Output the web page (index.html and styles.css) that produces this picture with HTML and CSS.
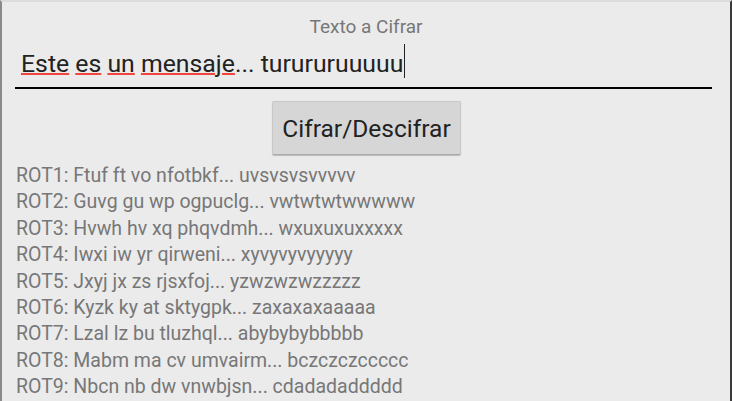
FILE: index.html
```html
<!DOCTYPE html>
<html lang="es">
<head>
  <meta charset="UTF-8">
  <title>Cifrado ROT</title>
  <meta name="viewport" content="width=device-width, initial-scale=1.0">
  <link rel="stylesheet" href="styles.css">
</head>
<body>

  <div class="screen">
    <div class="label">Texto a Cifrar</div>

    <div class="field">
      <span class="typo">Este</span> <span class="typo">es</span> <span class="typo">un</span> <span class="typo">mensaje</span>... turururuuuuu<span class="cursor"></span>
    </div>

    <div class="actions">
      <button class="btn">Cifrar/Descifrar</button>
    </div>

    <div class="results">
      <div>ROT1: Ftuf ft vo nfotbkf... uvsvsvsvvvvv</div>
      <div>ROT2: Guvg gu wp ogpuclg... vwtwtwtwwwww</div>
      <div>ROT3: Hvwh hv xq phqvdmh... wxuxuxuxxxxx</div>
      <div>ROT4: Iwxi iw yr qirweni... xyvyvyvyyyyy</div>
      <div>ROT5: Jxyj jx zs rjsxfoj... yzwzwzwzzzzz</div>
      <div>ROT6: Kyzk ky at sktygpk... zaxaxaxaaaaa</div>
      <div>ROT7: Lzal lz bu tluzhql... abybybybbbbb</div>
      <div>ROT8: Mabm ma cv umvairm... bczczczccccc</div>
      <div>ROT9: Nbcn nb dw vnwbjsn... cdadadaddddd</div>
    </div>
  </div>

</body>
</html>
```

FILE: styles.css
```css
html, body {
  margin: 0;
  height: 100%;
}

body {
  background: #ebebeb;
  font-family: Roboto, "Noto Sans", sans-serif;
  overflow: hidden;
}

.screen {
  height: 401px;
  box-sizing: border-box;
  border-left: 2px solid #8a8a8a;
  border-right: 2px solid #3a3a3a;
  border-top: 2px solid #dcdcdc;
  padding-top: 14px;
}

.label {
  text-align: center;
  font-size: 19px;
  line-height: 22px;
  color: #777;
}

.field {
  margin: 4px 18px 0 13px;
  padding: 6px 6px 7px 6px;
  border-bottom: 2px solid #000;
  font-size: 24.8px;
  line-height: 32px;
  color: #222;
  white-space: nowrap;
}

.typo {
  text-decoration: underline solid #f2453d 2px;
  text-underline-offset: 1px;
}

/* empty inline-block: negative margins keep it from growing the line box */
.cursor {
  display: inline-block;
  width: 1px;
  height: 34px;
  margin: -6px 0 -6px 1px;
  background: #222;
}

.actions {
  display: flex;
  justify-content: center;
  margin-top: 12px;
}

.btn {
  width: 189px;
  height: 54px;
  margin-left: 1px;
  font-family: Roboto, "Noto Sans", sans-serif;
  font-size: 24.5px;
  color: #222;
  background: #d6d6d6;
  border: 1px solid #c8c8c8;
  border-bottom-color: #aaa;
  border-radius: 2px;
  box-shadow: 0 1px 1px rgba(0,0,0,0.2);
  padding: 0;
}

.results {
  margin-top: 8px;
  padding-left: 14px;
  font-size: 19.5px;
  line-height: 26.4px;
  color: #777;
}
```
